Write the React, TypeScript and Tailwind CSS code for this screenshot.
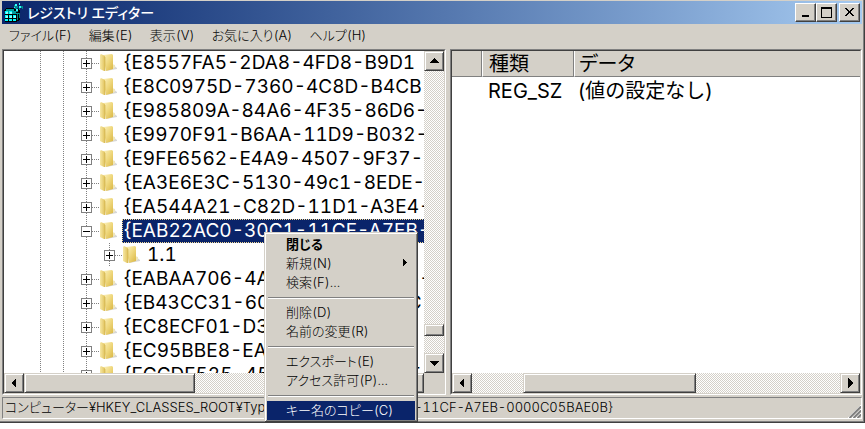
import type { ReactNode } from "react";

const raised =
  "border border-t-[#d4d0c8] border-l-[#d4d0c8] border-r-[#404040] border-b-[#404040] bg-[#d4d0c8] shadow-[inset_1px_1px_0_#fff,inset_-1px_-1px_0_#808080]";
const sunken =
  "border border-t-[#808080] border-l-[#808080] border-r-white border-b-white";
const innerEdge =
  "border border-t-[#404040] border-l-[#404040] border-r-[#d4d0c8] border-b-[#d4d0c8]";
const track =
  "bg-white bg-[conic-gradient(#d4d0c8_25%,#fff_0_50%,#d4d0c8_0_75%,#fff_0)] bg-[length:2px_2px]";

type Dir = "up" | "down" | "left" | "right";
const arrowPoints: Record<Dir, string> = {
  up: "6,3 11,8 1,8",
  down: "1,4 11,4 6,9",
  left: "3,6 8,1 8,11",
  right: "9,6 4,1 4,11",
};

function ArrowButton({ dir }: { dir: Dir }) {
  return (
    <button aria-label={dir} className={`flex size-5 shrink-0 items-center justify-center ${raised}`}>
      <svg width="12" height="12" viewBox="0 0 12 12" shapeRendering="crispEdges">
        <polygon points={arrowPoints[dir]} fill="#000" />
      </svg>
    </button>
  );
}

function CaptionButton({ label, children }: { label: string; children: ReactNode }) {
  return (
    <button
      aria-label={label}
      className="flex h-[19px] w-[21px] items-center justify-center border border-t-white border-l-white border-r-[#404040] border-b-[#404040] bg-[#d4d0c8] shadow-[inset_-1px_-1px_0_#808080]"
    >
      <svg width="13" height="13" viewBox="0 0 13 13" shapeRendering="crispEdges">
        {children}
      </svg>
    </button>
  );
}

function RegistryIcon() {
  return (
    <svg width="20" height="20" viewBox="0 0 20 20" shapeRendering="crispEdges" aria-hidden="true">
      <path d="M0 7l3-2h7v1h6v11l-4 2H1V8H0z" fill="#000" />
      <path d="M1 7l2-1h7v2h2v2h3l-1 1H2V8z" fill="#009a9a" />
      <path d="M1 8h3v3H1zM5 8h3v3H5zM1 12h3v3H1zM5 12h3v3H5zM9 12h3v3H9zM1 16h3v2H1zM5 16h3v2H5zM9 16h3v2H9z" fill="#0ff" />
      <path d="M2 9h2v2H2zM6 9h2v2H6zM2 13h2v2H2zM6 13h2v2H6zM10 13h2v2h-2z" fill="#8ff" />
      <path d="M13 11h1v6h-1zM15 10h1v5h-1z" fill="#007d7d" />
      <path d="M10 2h2v1h2v2h-1v1h-2V5h-1zM15 3h3v2h-2v2h-1zM12 7h2v2h-2zM18 3h1v3h-1z" fill="#008b8b" />
      <path d="M11 1h2v2h-2zM15 3h2v2h-2zM12 6h2v2h-2zM15 0h1v2h-1zM10 4h1v1h-1z" fill="#3ff" />
    </svg>
  );
}

function FolderGradients() {
  return (
    <svg width="0" height="0" className="absolute" aria-hidden="true">
      <defs>
        <linearGradient id="folder-front" x1="0" x2="1" y1="0" y2="1">
          <stop offset="0" stopColor="#fdf3c0" />
          <stop offset=".5" stopColor="#efd87e" />
          <stop offset="1" stopColor="#d9b540" />
        </linearGradient>
        <linearGradient id="folder-flap" x1="0" x2="1">
          <stop offset="0" stopColor="#f7e8a4" />
          <stop offset="1" stopColor="#e0c25c" />
        </linearGradient>
      </defs>
    </svg>
  );
}

function Folder() {
  return (
    <svg width="18" height="20" viewBox="0 0 18 20" aria-hidden="true" className="shrink-0">
      <path d="M6 18l11-2v-1l-4-3z" fill="#c4c4c4" opacity=".7" />
      <path d="M12 11l3 1v3l-3 1z" fill="#efe6bb" />
      <path d="M3 2l9-1 1 1v14l-7 2z" fill="url(#folder-front)" />
      <path d="M0 2l1-1 4 2v15l-1 0-4-2z" fill="url(#folder-flap)" />
      <path d="M5 4v14" stroke="#cfae45" strokeWidth="1" opacity=".6" />
    </svg>
  );
}

function Expander({ open = false }: { open?: boolean }) {
  return (
    <button
      aria-label={open ? "-" : "+"}
      className="relative flex size-[11px] shrink-0 items-center justify-center border border-[#808080] bg-white"
    >
      <svg width="7" height="7" viewBox="0 0 7 7" shapeRendering="crispEdges">
        <path d={open ? "M0 3h7v1H0z" : "M0 3h7v1H0zM3 0h1v7H3z"} fill="#000" />
      </svg>
    </button>
  );
}

const vline =
  "h-6 w-px shrink-0 bg-[repeating-linear-gradient(180deg,#808080_0_1px,#fff_1px_2px)]";
const hline = "h-px w-2 shrink-0 bg-[repeating-linear-gradient(90deg,#808080_0_1px,#fff_1px_2px)]";

type Row = { name: string; child?: boolean; selected?: boolean };
const rows: Row[] = [
  { name: "{E8557FA5-2DA8-4FD8-B9D1" },
  { name: "{E8C0975D-7360-4C8D-B4CB" },
  { name: "{E985809A-84A6-4F35-86D6-" },
  { name: "{E9970F91-B6AA-11D9-B032-" },
  { name: "{E9FE6562-E4A9-4507-9F37-" },
  { name: "{EA3E6E3C-5130-49c1-8EDE-" },
  { name: "{EA544A21-C82D-11D1-A3E4-" },
  { name: "{EAB22AC0-30C1-11CF-A7EB-0000C05BAE0B}", selected: true },
  { name: "1.1", child: true },
  { name: "{EABAA706-4A8D-4F5B-9D15-" },
  { name: "{EB43CC31-60A5-4C8E-A0DC" },
  { name: "{EC8ECF01-D3B2-4E2A-B7C5" },
  { name: "{EC95BBE8-EA10-4B7A-9DE3" },
  { name: "{ECCDF525-45CF-4A4D-B5CF" },
];

function TreeRow({ name, child, selected }: Row) {
  return (
    <li className="flex h-6 items-center pl-9">
      <span className={vline} />
      <span className={`ml-[22px] ${vline}`} />
      <span className={`ml-[22px] ${vline}`} />
      {child && <span className={`ml-[22px] ${vline}`} />}
      <span className="-ml-1.5 flex items-center">
        <Expander open={selected} />
        <span className={hline} />
        <Folder />
      </span>
      <span
        className={`ml-1 flex h-6 items-center px-0.5 text-[19px] leading-6 whitespace-nowrap ${
          selected ? "bg-[#0a246a] text-white outline-1 -outline-offset-1 outline-dotted outline-[#f5db95]" : ""
        }`}
      >
        {name}
      </span>
    </li>
  );
}

const menus = ["ファイル(F)", "編集(E)", "表示(V)", "お気に入り(A)", "ヘルプ(H)"];

const contextMenu: { label: string; bold?: boolean; sub?: boolean; active?: boolean }[][] = [
  [{ label: "閉じる", bold: true }, { label: "新規(N)", sub: true }, { label: "検索(F)..." }],
  [{ label: "削除(D)" }, { label: "名前の変更(R)" }],
  [{ label: "エクスポート(E)" }, { label: "アクセス許可(P)..." }],
  [{ label: "キー名のコピー(C)", active: true }],
];

function ContextMenu() {
  return (
    <div
      role="menu"
      className={`absolute top-[232px] left-[264px] w-[154px] px-0.5 pt-0.5 pb-px ${raised}`}
    >
      {contextMenu.map((group, g) => (
        <div key={g}>
          {g > 0 && (
            <div className="flex h-[11px] items-center">
              <hr className="mx-px h-0.5 flex-1 border-t border-b border-t-[#808080] border-b-white" />
            </div>
          )}
          {group.map((item) => (
            <button
              key={item.label}
              role="menuitem"
              className={`flex h-[19px] w-full items-center pr-2 pb-0.5 pl-[19px] text-[13px] leading-4 whitespace-nowrap ${
                item.active ? "bg-[#0a246a] text-white" : ""
              } ${item.bold ? "font-bold" : "font-light"}`}
            >
              <span className="flex-1 text-left">{item.label}</span>
              {item.sub && (
                <svg width="4" height="7" viewBox="0 0 4 7" shapeRendering="crispEdges">
                  <path d="M0 0l4 3.5L0 7z" />
                </svg>
              )}
            </button>
          ))}
        </div>
      ))}
    </div>
  );
}

export default function App() {
  return (
    <div className="relative h-screen overflow-hidden bg-white pb-1.5 font-[Inter,'Noto_Sans_CJK_JP',sans-serif] text-black [font-feature-settings:'palt','tnum']">
      <FolderGradients />
      <main className="flex h-full flex-col border-r border-b border-[#404040] bg-[#d4d0c8] pt-px pl-0.5 shadow-[inset_-1px_-1px_0_#808080]">
        <header className="mr-0.5 flex h-[23px] items-center bg-linear-to-r from-[#0a246a] to-[#a6caf0] pr-0.5 pl-0.5">
          <RegistryIcon />
          <h1 className="ml-[3px] flex-1 text-sm font-medium whitespace-nowrap text-white">レジストリ エディター</h1>
          <CaptionButton label="最小化">
            <path d="M3 9h7v2H3z" />
          </CaptionButton>
          <CaptionButton label="最大化">
            <path d="M1 1h11v11H1zM2 3v8h9V3z" fillRule="evenodd" />
          </CaptionButton>
          <span className="w-0.5" />
          <CaptionButton label="閉じる">
            <path d="M2 2h2v1h1v1h1v1h1V4h1V3h1V2h2v1h-1v1H9v1H8v2h1v1h1v1h1v1H9V9H8V8H7V7H6v1H5v1H4v1H2V9h1V8h1V7h1V5H4V4H3V3H2z" />
          </CaptionButton>
        </header>

        <nav className="flex h-[25px] items-center gap-[17px] pb-0.5 pl-[7px] text-[13px] font-light whitespace-nowrap">
          {menus.map((m) => (
            <button key={m}>{m}</button>
          ))}
        </nav>

        <div className="mr-0.5 flex min-h-0 flex-1 gap-1">
          <section className={`w-[444px] shrink-0 ${sunken}`}>
            <div className={`flex h-full flex-col ${innerEdge}`}>
              <div className="flex min-h-0 flex-1">
                <ul className="min-w-0 flex-1 overflow-hidden bg-white">
                  {rows.map((r) => (
                    <TreeRow key={r.name} {...r} />
                  ))}
                </ul>
                <div className={`flex w-5 flex-col ${track}`}>
                  <ArrowButton dir="up" />
                  <span className="flex-[255]" />
                  <span className={`flex-[10] ${raised}`} />
                  <span className="flex-[17]" />
                  <ArrowButton dir="down" />
                </div>
              </div>
              <div className="flex h-5 shrink-0">
                <div className={`flex flex-1 ${track}`}>
                  <ArrowButton dir="left" />
                  <span className={`flex-[170] ${raised}`} />
                  <span className="flex-[210]" />
                  <ArrowButton dir="right" />
                </div>
                <span className="w-5" />
              </div>
            </div>
          </section>

          <section className={`min-w-0 flex-1 ${sunken}`}>
            <div className={`flex h-full flex-col ${innerEdge}`}>
              <div className="min-h-0 flex-1 overflow-hidden bg-white">
                <table className="w-full table-fixed border-separate border-spacing-0 text-xl leading-6 whitespace-nowrap">
                  <colgroup>
                    <col className="w-[30px]" />
                    <col className="w-[92px]" />
                    <col />
                  </colgroup>
                  <thead>
                    <tr className="h-[26px] bg-[#d4d0c8] text-left">
                      <th className="border-r border-b border-[#808080] p-0" />
                      <th className="border-r border-b border-l border-[#808080] border-l-white py-0 pr-0 pl-1.5 font-normal">種類</th>
                      <th className="border-b border-l border-[#808080] border-l-white py-0 pr-0 pl-1 font-normal">データ</th>
                    </tr>
                  </thead>
                  <tbody>
                    <tr className="h-7">
                      <td className="p-0" />
                      <td className="py-0 pr-0 pl-1.5">REG_SZ</td>
                      <td className="py-0 pr-0 pl-1 [font-feature-settings:normal]">(値の設定なし)</td>
                    </tr>
                  </tbody>
                </table>
              </div>
              <div className={`flex h-5 shrink-0 ${track}`}>
                <ArrowButton dir="left" />
                <span className="flex-[51]" />
                <span className={`flex-[172] ${raised}`} />
                <span className="flex-[145]" />
                <ArrowButton dir="right" />
              </div>
            </div>
          </section>
        </div>

        <footer className={`mt-0.5 mr-0.5 mb-[3px] flex h-[22px] shrink-0 items-center pl-0.5 text-[13px] font-light whitespace-nowrap ${sunken}`}>
          <span className="flex-1">コンピューター¥HKEY_CLASSES_ROOT¥TypeLib¥&#123;EAB22AC0-30C1-11CF-A7EB-0000C05BAE0B&#125;</span>
          <svg width="13" height="13" viewBox="0 0 13 13" className="self-end">
            <path d="M0 13L13 0M4 13L13 4M8 13L13 8" stroke="#fff" strokeWidth="1" />
            <path d="M1.5 13L13 1.5M5.5 13L13 5.5M9.5 13L13 9.5" stroke="#808080" strokeWidth="2" />
          </svg>
        </footer>
      </main>
      <ContextMenu />
    </div>
  );
}
